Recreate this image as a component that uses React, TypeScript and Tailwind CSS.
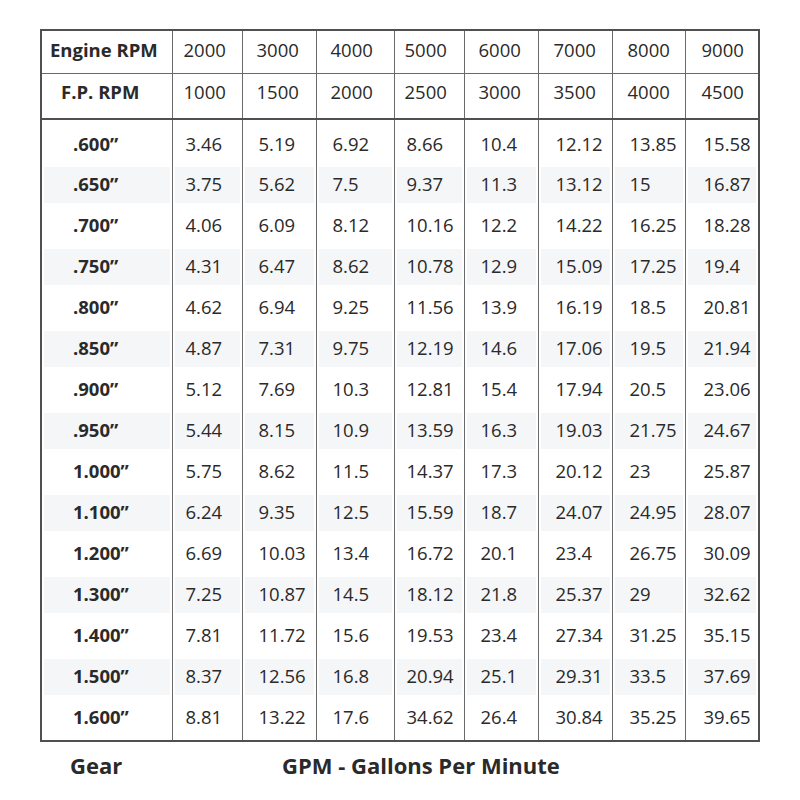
import React from "react";

const widths = ["w-[131px]", "w-[70px]", "w-[74px]", "w-[78px]", "w-[70px]", "w-[74px]", "w-[74px]", "w-[73px]", "w-[74px]"];
const pads = ["", "pl-[11px]", "pl-[14px]", "pl-[14px]", "pl-[10px]", "pl-[14px]", "pl-[15px]", "pl-[15px]", "pl-[16px]"];

const engine = ["2000", "3000", "4000", "5000", "6000", "7000", "8000", "9000"];
const fp = ["1000", "1500", "2000", "2500", "3000", "3500", "4000", "4500"];

const rows: [string, string[]][] = [
  [".600”", ["3.46", "5.19", "6.92", "8.66", "10.4", "12.12", "13.85", "15.58"]],
  [".650”", ["3.75", "5.62", "7.5", "9.37", "11.3", "13.12", "15", "16.87"]],
  [".700”", ["4.06", "6.09", "8.12", "10.16", "12.2", "14.22", "16.25", "18.28"]],
  [".750”", ["4.31", "6.47", "8.62", "10.78", "12.9", "15.09", "17.25", "19.4"]],
  [".800”", ["4.62", "6.94", "9.25", "11.56", "13.9", "16.19", "18.5", "20.81"]],
  [".850”", ["4.87", "7.31", "9.75", "12.19", "14.6", "17.06", "19.5", "21.94"]],
  [".900”", ["5.12", "7.69", "10.3", "12.81", "15.4", "17.94", "20.5", "23.06"]],
  [".950”", ["5.44", "8.15", "10.9", "13.59", "16.3", "19.03", "21.75", "24.67"]],
  ["1.000”", ["5.75", "8.62", "11.5", "14.37", "17.3", "20.12", "23", "25.87"]],
  ["1.100”", ["6.24", "9.35", "12.5", "15.59", "18.7", "24.07", "24.95", "28.07"]],
  ["1.200”", ["6.69", "10.03", "13.4", "16.72", "20.1", "23.4", "26.75", "30.09"]],
  ["1.300”", ["7.25", "10.87", "14.5", "18.12", "21.8", "25.37", "29", "32.62"]],
  ["1.400”", ["7.81", "11.72", "15.6", "19.53", "23.4", "27.34", "31.25", "35.15"]],
  ["1.500”", ["8.37", "12.56", "16.8", "20.94", "25.1", "29.31", "33.5", "37.69"]],
  ["1.600”", ["8.81", "13.22", "17.6", "34.62", "26.4", "30.84", "35.25", "39.65"]],
];

const cell = "border-x border-[#6a6a6a] p-0 align-middle";

export default function App() {
  return (
    <div className="h-[800px] w-[800px] bg-white pt-[29px] pl-[40px] font-['Open_Sans',sans-serif] text-[#2a2a2a]">
      <table className="table-fixed border-collapse border-2 border-[#505050] text-[18.5px] font-medium leading-none">
        <colgroup>
          {widths.map((w, i) => (
            <col key={i} className={w} />
          ))}
        </colgroup>
        <thead>
          <tr className="h-[43px] border-b border-[#6a6a6a]">
            <th className={`${cell} pb-[3px] pl-[8px] text-left font-bold`}>Engine RPM</th>
            {engine.map((v, i) => (
              <td key={i} className={`${cell} pb-[3px] ${pads[i + 1]}`}>
                {v}
              </td>
            ))}
          </tr>
          <tr className="h-[46px] border-b-2 border-[#505050]">
            <th className={`${cell} pb-[7px] pl-[19px] text-left font-bold`}>F.P. RPM</th>
            {fp.map((v, i) => (
              <td key={i} className={`${cell} pb-[7px] ${pads[i + 1]}`}>
                {v}
              </td>
            ))}
          </tr>
        </thead>
        <tbody>
          {rows.map(([gear, vals], r) => {
            const striped = r % 2 === 1;
            const h = r === 0 ? "h-[45px] pt-[4px]" : r === rows.length - 1 ? "h-[44px] pb-[3px]" : "h-[41px]";
            const bg = striped ? "bg-[#f5f6f8]" : "";
            return (
              <tr key={gear}>
                <td className={`${cell} ${h}`}>
                  <div className={`mx-[2px] flex h-[36px] items-center pl-[29px] font-bold ${bg}`}>{gear}</div>
                </td>
                {vals.map((v, i) => (
                  <td key={i} className={`${cell} ${h}`}>
                    <div className={`mx-[2px] flex h-[36px] items-center ${pads[i + 1]} ${bg}`}>{v}</div>
                  </td>
                ))}
              </tr>
            );
          })}
        </tbody>
      </table>
      <div className="mt-[9px] flex text-[22px] font-bold leading-[28px] text-[#2a2a2a]">
        <div className="w-[242px] pl-[30px]">Gear</div>
        <div>GPM - Gallons Per Minute</div>
      </div>
    </div>
  );
}
